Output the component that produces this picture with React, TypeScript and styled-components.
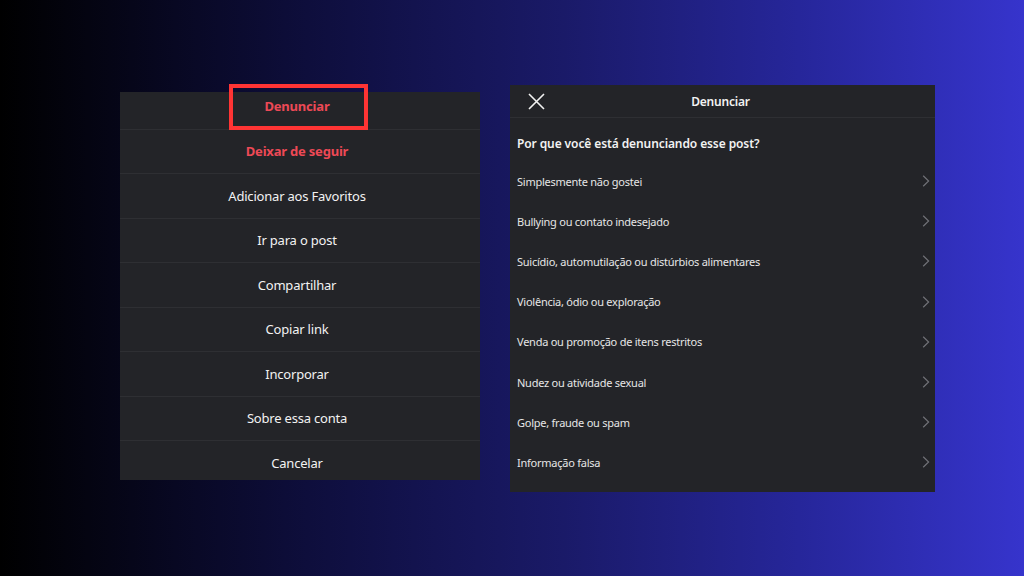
import React from "react";
import styled, { createGlobalStyle } from "styled-components";

const Global = createGlobalStyle`
  html, body { margin: 0; padding: 0; }
  body {
    width: 1024px;
    height: 576px;
    overflow: hidden;
    font-family: "Noto Sans", "Open Sans", sans-serif;
    background: linear-gradient(90deg, #000000 0%, #0e0e3c 30%, #1a1a68 55%, #26269a 78%, #3634cc 100%);
  }
`;

const Stage = styled.div`
  width: 1024px;
  height: 576px;
  display: flex;
  align-items: flex-start;
  padding-left: 120px;
  gap: 30px;
  box-sizing: border-box;
`;

const MenuPanel = styled.div`
  position: relative;
  margin-top: 92px;
  width: 360px;
  height: 388px;
  background: #232428;
`;

const MenuClip = styled.div`
  height: 100%;
  overflow: hidden;
  display: flex;
  flex-direction: column;
`;

const MenuRow = styled.div<{ $danger?: boolean; $first?: boolean }>`
  flex: 0 0 44.5px;
  height: 44.5px;
  box-sizing: border-box;
  display: flex;
  align-items: center;
  justify-content: center;
  padding-right: 6px;
  border-top: ${(p) => (p.$first ? "none" : "1px solid #2e2f33")};
  margin-top: ${(p) => (p.$first ? "-8px" : "0")};
  font-size: 13px;
  font-weight: ${(p) => (p.$danger ? 700 : 400)};
  color: ${(p) => (p.$danger ? "#ed4956" : "#f2f2f2")};
  letter-spacing: -0.2px;
`;

const Highlight = styled.div`
  position: absolute;
  left: 109px;
  top: -8px;
  width: 139px;
  height: 46px;
  border: 4px solid #ff3434;
  box-sizing: border-box;
`;

const ReportPanel = styled.div`
  margin-top: 85px;
  width: 425px;
  height: 407px;
  background: #232428;
  display: flex;
  flex-direction: column;
`;

const Header = styled.div`
  position: relative;
  height: 33px;
  flex: 0 0 33px;
  box-sizing: border-box;
  border-bottom: 1px solid #2e2f33;
  display: flex;
  align-items: center;
  justify-content: center;
  padding: 0 18px 0 14px;
`;

const CloseButton = styled.div`
  position: absolute;
  left: 18px;
  top: 8px;
  width: 17px;
  height: 17px;
  display: flex;
`;

const Title = styled.div`
  color: #f2f2f2;
  font-size: 12px;
  font-weight: 600;
  letter-spacing: -0.2px;
`;

const Question = styled.div`
  flex: 0 0 43px;
  box-sizing: border-box;
  padding: 8px 7px 0 7px;
  display: flex;
  align-items: center;
  color: #f2f2f2;
  font-size: 12px;
  font-weight: 600;
  letter-spacing: -0.1px;
`;

const Reason = styled.div`
  flex: 0 0 40.2px;
  display: flex;
  align-items: center;
  justify-content: space-between;
  padding: 0 5px 0 7px;
  color: #e6e6e6;
  font-size: 11px;
  letter-spacing: -0.25px;
`;

const Chevron = () => (
  <svg width="8" height="12" viewBox="0 0 8 12" fill="none">
    <path d="M1.2 0.8 L6.6 6 L1.2 11.2" stroke="#707177" strokeWidth="1.2" />
  </svg>
);

const CloseIcon = () => (
  <svg width="17" height="17" viewBox="0 0 17 17" fill="none">
    <path d="M1 1 L16 16 M16 1 L1 16" stroke="#f2f2f2" strokeWidth="1.6" />
  </svg>
);

const menu = [
  { label: "Denunciar", danger: true },
  { label: "Deixar de seguir", danger: true },
  { label: "Adicionar aos Favoritos" },
  { label: "Ir para o post" },
  { label: "Compartilhar" },
  { label: "Copiar link" },
  { label: "Incorporar" },
  { label: "Sobre essa conta" },
  { label: "Cancelar" },
];

const reasons = [
  "Simplesmente não gostei",
  "Bullying ou contato indesejado",
  "Suicídio, automutilação ou distúrbios alimentares",
  "Violência, ódio ou exploração",
  "Venda ou promoção de itens restritos",
  "Nudez ou atividade sexual",
  "Golpe, fraude ou spam",
  "Informação falsa",
];

export default function App() {
  return (
    <>
      <Global />
      <Stage>
        <MenuPanel>
          <MenuClip>
            {menu.map((m, i) => (
              <MenuRow key={m.label} $danger={m.danger} $first={i === 0}>
                {m.label}
              </MenuRow>
            ))}
          </MenuClip>
          <Highlight />
        </MenuPanel>
        <ReportPanel>
          <Header>
            <CloseButton>
              <CloseIcon />
            </CloseButton>
            <Title>Denunciar</Title>
          </Header>
          <Question>Por que você está denunciando esse post?</Question>
          {reasons.map((r) => (
            <Reason key={r}>
              <span>{r}</span>
              <Chevron />
            </Reason>
          ))}
        </ReportPanel>
      </Stage>
    </>
  );
}
